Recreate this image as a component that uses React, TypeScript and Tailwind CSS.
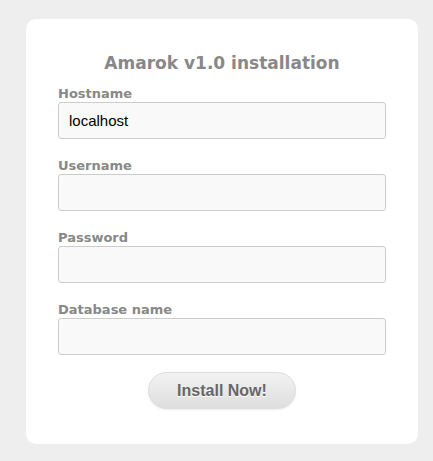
import React from 'react';

const fields = [
  { label: 'Hostname', value: 'localhost' },
  { label: 'Username', value: '' },
  { label: 'Password', value: '' },
  { label: 'Database name', value: '' },
];

const App: React.FC = () => {
  return (
    <div className="min-h-[461px] bg-[#eeeeee] pt-[19px] pl-[26px]">
      <div className="w-[392px] rounded-[10px] bg-white px-[32px] pt-[34px] pb-[35px]">
        <h1 className="text-center text-[17px] leading-[20px] font-bold text-[#888888] font-['DejaVu_Sans',sans-serif]">
          Amarok v1.0 installation
        </h1>
        <div className="mt-[13px] flex flex-col gap-[19px]">
          {fields.map((f) => (
            <div key={f.label}>
              <label className="block text-[13px] leading-[16px] font-bold text-[#888888] font-['DejaVu_Sans',sans-serif]">
                {f.label}
              </label>
              <input
                type={f.label === 'Password' ? 'password' : 'text'}
                defaultValue={f.value}
                className="block h-[37px] w-full rounded-[3px] border border-[#cccccc] bg-[#f9f9f9] px-[10px] text-[15px] text-black font-['Liberation_Sans',Arial,sans-serif] outline-none"
              />
            </div>
          ))}
        </div>
        <div className="mt-[17px] flex justify-center">
          <button className="h-[37px] w-[148px] rounded-full border border-[#dddddd] bg-gradient-to-b from-[#f2f2f2] to-[#dedede] text-[16px] font-bold text-[#666666] font-['Liberation_Sans',Arial,sans-serif] [text-shadow:0_1px_0_#ffffff] shadow-[0_1px_2px_rgba(0,0,0,0.08)]">
            Install Now!
          </button>
        </div>
      </div>
    </div>
  );
};

export default App;
